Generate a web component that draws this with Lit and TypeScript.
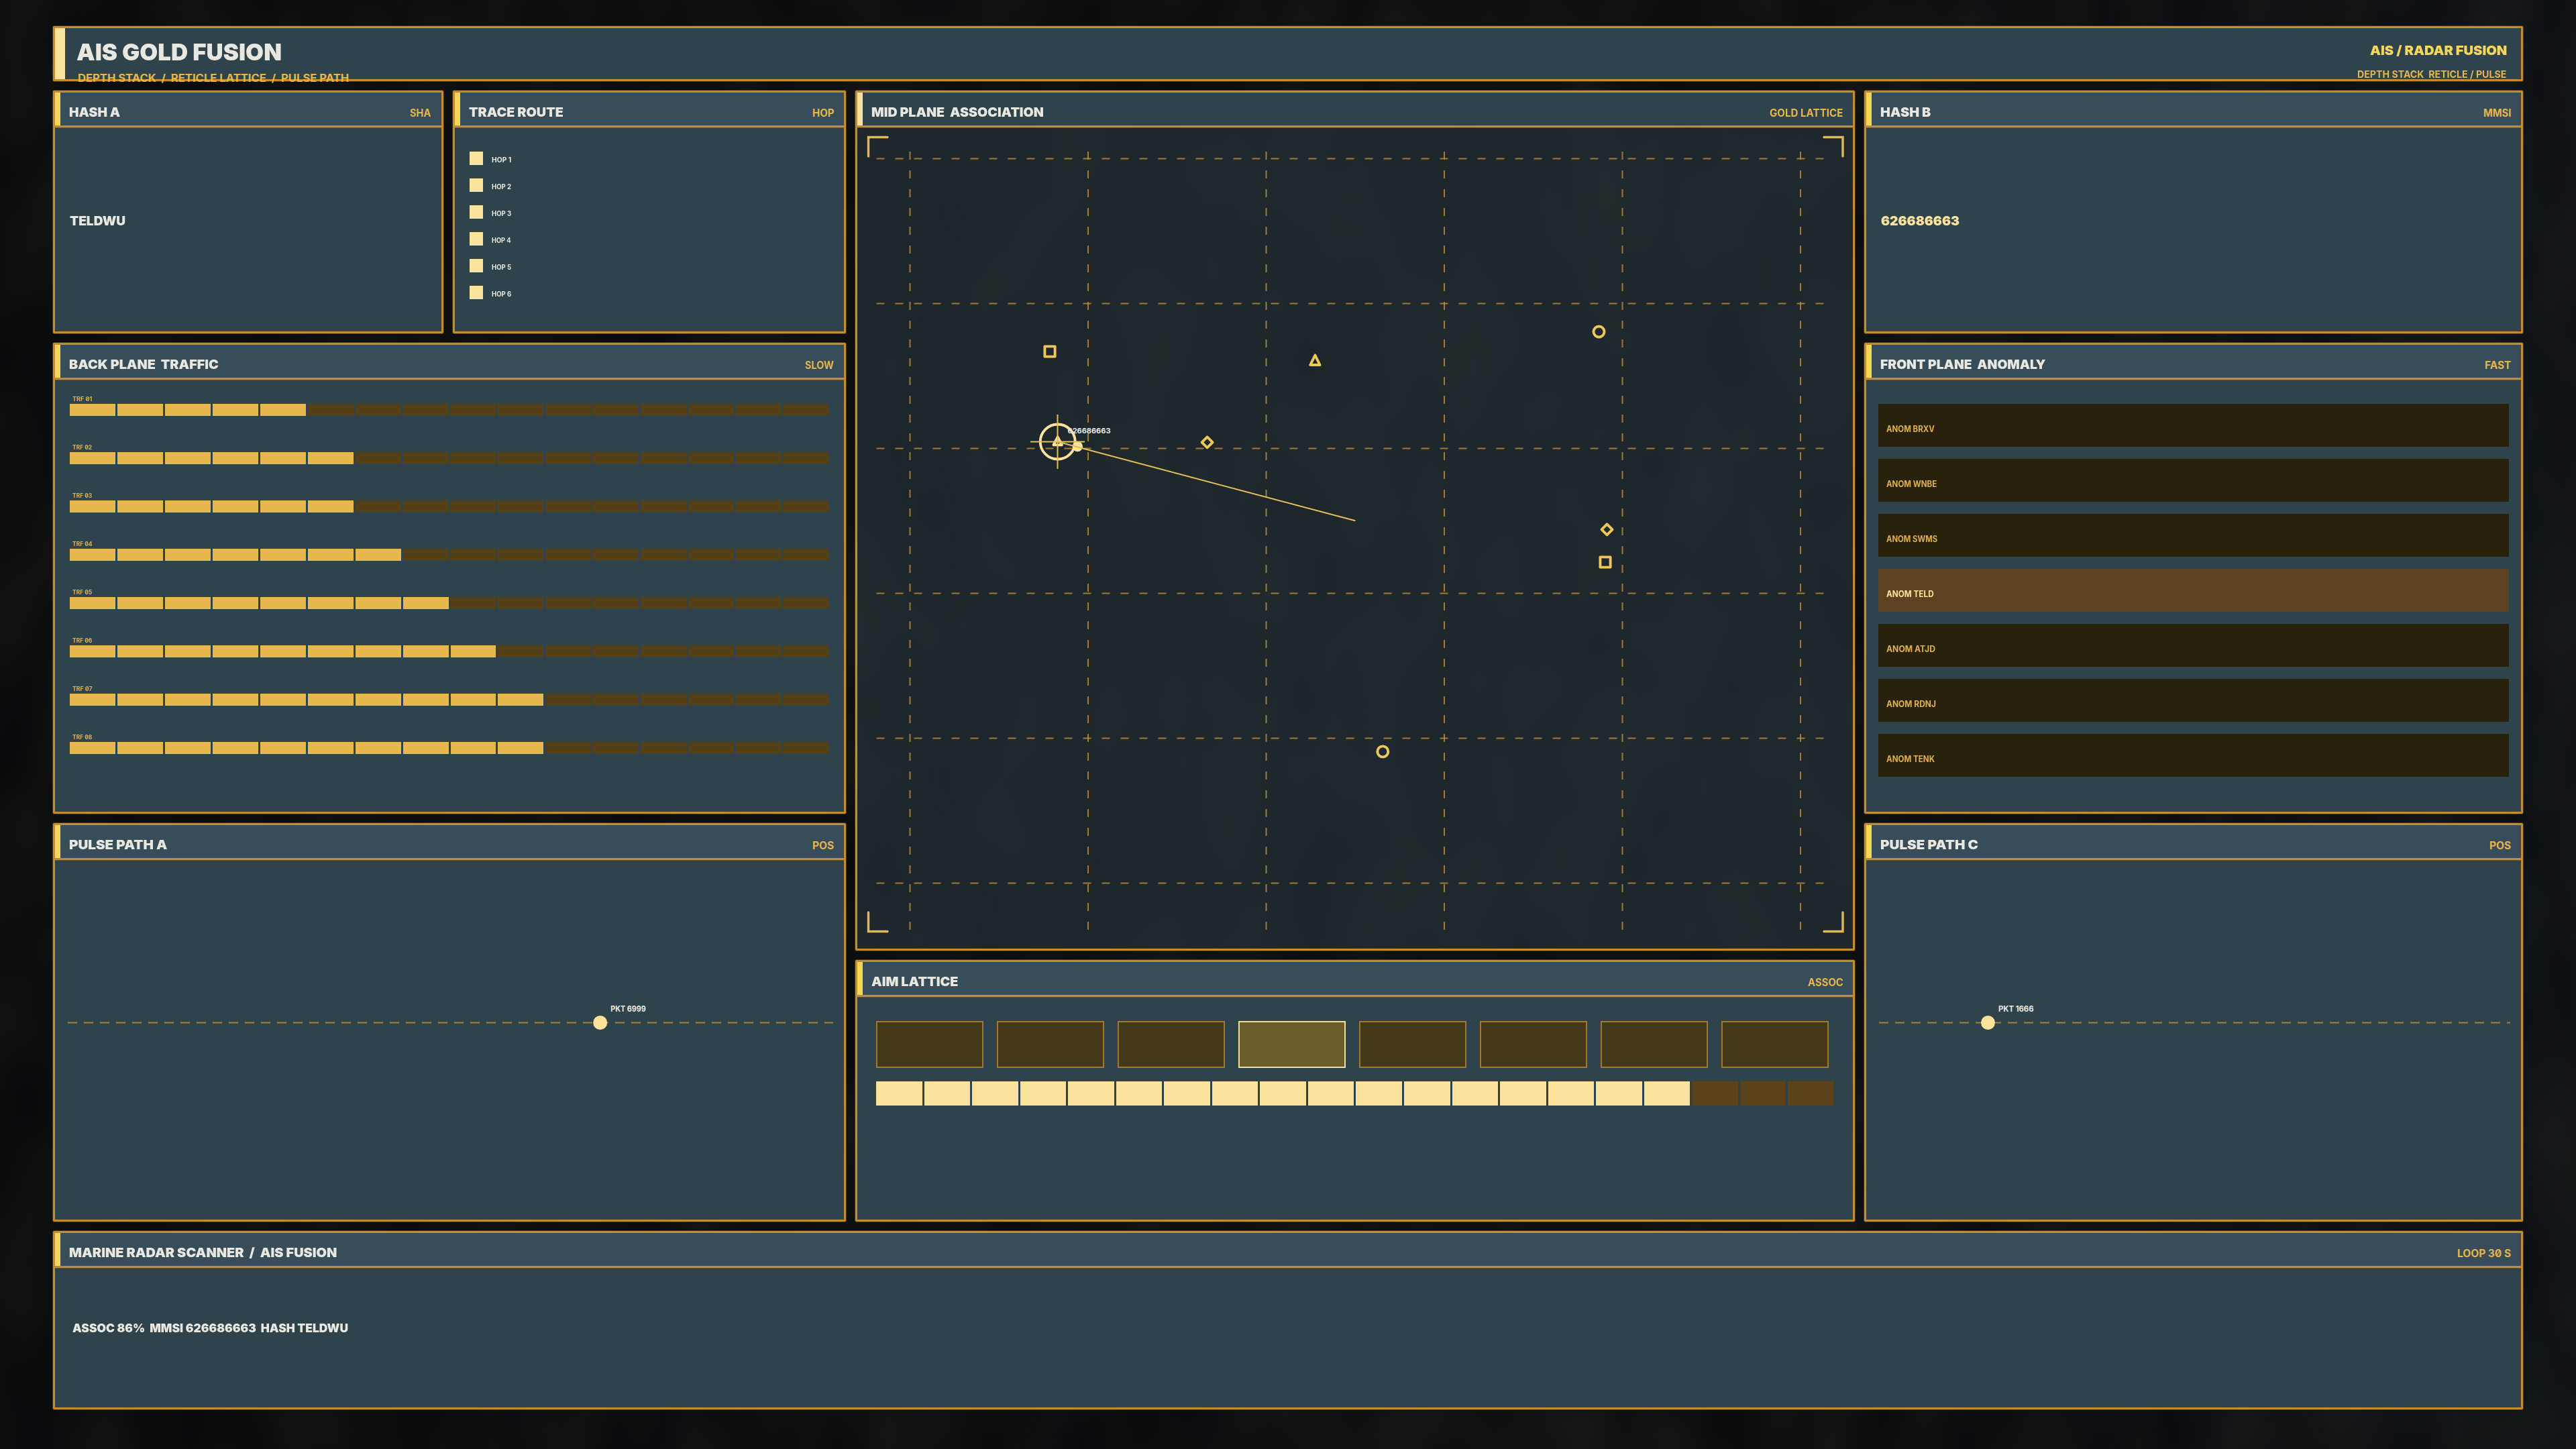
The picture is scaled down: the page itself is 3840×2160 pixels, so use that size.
import { LitElement, html, svg, css } from "lit";
import { customElement, property } from "lit/decorators.js";

const pen = document.createElement("canvas").getContext("2d")!;
const CAP_RATIO = 0.7273;

/** A line of capitals set to an exact cap height and ink width. */
@customElement("fit-text")
class FitText extends LitElement {
  @property() text = "";
  @property({ type: Number }) cap = 14;
  @property({ type: Number }) width = 100;
  @property({ type: Number }) weight = 900;

  static styles = css`
    :host {
      display: block;
      flex: none;
    }
    .line {
      display: inline-block;
      white-space: pre;
      transform-origin: 0 0;
      font-family: Inter, "Liberation Sans", sans-serif;
      font-feature-settings: "zero" 1;
      line-height: ${0.7273};
      vertical-align: top;
    }
  `;

  render() {
    const size = this.cap / CAP_RATIO;
    pen.font = `${this.weight} ${size}px Inter, "Liberation Sans", sans-serif`;
    const m = pen.measureText(this.text);
    const k = this.width / (m.actualBoundingBoxLeft + m.actualBoundingBoxRight);
    this.style.width = `${this.width}px`;
    this.style.height = `${this.cap}px`;
    return html`<span
      class="line"
      style="font-size:${size}px;font-weight:${this.weight};transform:matrix(${k},0,0,1,${m.actualBoundingBoxLeft * k},0)"
      >${this.text}</span
    >`;
  }
}

/** Framed panel with a title bar, an accent tab and a badge. */
@customElement("plane-panel")
class PlanePanel extends LitElement {
  @property() heading = "";
  @property({ type: Number }) headingWidth = 100;
  @property() badge = "";
  @property({ type: Number }) badgeWidth = 30;
  @property({ type: Boolean, reflect: true }) focal = false;

  static styles = css`
    :host {
      display: flex;
      flex-direction: column;
      box-sizing: border-box;
      border: 3px solid #c48c2f;
      border-radius: 2px;
      box-shadow: 0 0 0 1px rgba(196, 140, 47, 0.28);
      background: #2f434c;
      min-width: 0;
      min-height: 0;
    }
    :host([focal]) {
      background: rgba(48, 67, 76, 0.48);
    }
    .bar {
      display: flex;
      align-items: flex-end;
      height: 49px;
      flex: none;
      background: #374d59;
      border-bottom: 3px solid #c48c2f;
      box-shadow: 0 1px 0 rgba(196, 140, 47, 0.28);
    }
    :host([focal]) .bar {
      background: #2f434c;
    }
    .tab {
      width: 8px;
      align-self: stretch;
      background: #f6d55c;
      margin-right: 12.5px;
    }
    :host([focal]) .tab {
      background: #fbe39d;
    }
    .heading {
      color: #e9e8e0;
      margin-bottom: 13px;
    }
    .badge {
      color: #e6b64c;
      margin: 0 15px 13px auto;
    }
    .body {
      flex: 1;
      display: flex;
      flex-direction: column;
      min-height: 0;
    }
  `;

  render() {
    return html`
      <div class="bar">
        <div class="tab"></div>
        <fit-text class="heading" .text=${this.heading} .cap=${14} .width=${this.headingWidth}></fit-text>
        <fit-text class="badge" .text=${this.badge} .cap=${11.2} .width=${this.badgeWidth} .weight=${700}></fit-text>
      </div>
      <div class="body"><slot></slot></div>
    `;
  }
}

const TRAFFIC = [5, 6, 6, 7, 8, 9, 10, 10];
const ANOMALIES: [string, number][] = [
  ["BRXV", 72.3],
  ["WNBE", 74.6],
  ["SWMS", 76],
  ["TELD", 70.6],
  ["ATJD", 73],
  ["RDNJ", 73.6],
  ["TENK", 72],
];
const GRID_X = [1356.5, 1622, 1887.5, 2153, 2418.5, 2684];
const GRID_Y = [236.5, 452.5, 668.5, 884.5, 1100.5, 1316.5];
const range = (n: number) => Array.from({ length: n }, (_, i) => i);

@customElement("app-root")
class AppRoot extends LitElement {
  static styles = css`
    :host {
      display: block;
      position: relative;
      box-sizing: border-box;
      width: 3840px;
      height: 2160px;
      overflow: hidden;
      background: #0d1012;
      font-family: Inter, "Liberation Sans", sans-serif;
    }
    .haze {
      position: absolute;
      inset: 0;
      width: 100%;
      height: 100%;
    }
    .frame {
      position: relative;
      display: flex;
      flex-direction: column;
      gap: 14px;
      box-sizing: border-box;
      height: 100%;
      padding: 39px 79px 59px;
    }
    .masthead {
      display: flex;
      height: 82px;
      flex: none;
      box-sizing: border-box;
      border: 3px solid #c48c2f;
      border-radius: 2px;
      box-shadow: 0 0 0 1px rgba(196, 140, 47, 0.28);
      background: #2f434c;
    }
    .mast-tab {
      width: 14.5px;
      background: #fbe39d;
      margin-right: 17.7px;
    }
    .mast-left {
      flex: 1;
      padding-top: 23px;
    }
    .mast-title {
      color: #e9e8e0;
    }
    .mast-sub {
      color: #e6b64c;
      margin: 20.8px 0 0 2.7px;
    }
    .mast-right {
      display: flex;
      flex-direction: column;
      align-items: flex-end;
      padding: 26px 21.3px 0 0;
    }
    .mast-mode {
      color: #f6d55c;
    }
    .mast-note {
      color: #e6b64c;
      margin-top: 23.8px;
    }
    .planes {
      display: grid;
      grid-template-columns: 1182px 1490px 982px;
      gap: 14px;
      flex: 1;
      min-height: 0;
    }
    .left,
    .right {
      display: grid;
      grid-template-rows: 362px 702px 594px;
      gap: 14px;
    }
    .pair {
      display: grid;
      grid-template-columns: 582px 586px;
      gap: 14px;
    }
    .middle {
      display: grid;
      grid-template-rows: 1282px 390px;
      gap: 14px;
    }
    .footer {
      height: 266px;
      flex: none;
    }
    .hash {
      margin: 132px 0 0 22.4px;
      color: #e9e8e0;
    }
    .hash.hot {
      color: #fbe39d;
    }
    .hops {
      display: flex;
      flex-direction: column;
      gap: 20px;
      padding: 36px 0 0 22px;
    }
    .hop {
      display: flex;
      gap: 12.6px;
      height: 20px;
      color: #e9e8e0;
    }
    .hop-box {
      width: 20px;
      background: #fbe39d;
    }
    .hop-name {
      margin-top: 9px;
    }
    .traffic {
      padding: 25.7px 22px 0;
    }
    .lane {
      height: 72px;
      display: flex;
      flex-direction: column;
      gap: 4px;
      color: #e0b24d;
    }
    .lane-name {
      margin-left: 4.4px;
    }
    .segments {
      display: flex;
      gap: 3px;
      height: 18px;
    }
    .segment {
      flex: 1;
      background: #553f17;
    }
    .segment.on {
      background: #e7b84d;
    }
    .anomalies {
      display: flex;
      flex-direction: column;
      gap: 18px;
      padding: 36px 18px 0;
    }
    .anomaly {
      box-sizing: border-box;
      height: 64px;
      padding: 33px 0 0 12px;
      background: #28210b;
      color: #e0b04a;
    }
    .anomaly.active {
      background: #5c4220;
      color: #fbe39d;
    }
    .cells {
      display: flex;
      gap: 20px;
      padding: 36px 28px 0;
    }
    .cell {
      box-sizing: border-box;
      width: 160px;
      height: 70px;
      border: 2px solid #a57727;
      background: #43391a;
    }
    .cell.active {
      border-color: #f3dc96;
      background: #6b5e2a;
    }
    .strength {
      display: flex;
      gap: 3px;
      height: 36px;
      margin: 20px 28px 0;
    }
    .step {
      flex: 1;
      background: #5b421a;
    }
    .step.on {
      background: #fbe39d;
    }
    .plot {
      display: block;
      width: 100%;
      flex: 1;
      min-height: 0;
    }
    .rule {
      stroke: #c68f30;
      stroke-width: 2;
      opacity: 0.8;
    }
    .bracket {
      fill: none;
      stroke: #e7b84d;
      stroke-width: 3.4;
      stroke-linecap: round;
    }
    .mark {
      fill: none;
      stroke: #efc65a;
      stroke-width: 3.9;
      stroke-linejoin: round;
    }
    .cream {
      stroke: #fbe39d;
    }
    .fill {
      fill: #fbe39d;
    }
    .hair {
      stroke: #e3c05c;
      stroke-width: 2;
    }
    .tag {
      fill: #eceae3;
      font-weight: 700;
    }
    .status {
      margin: 84px 0 0 26px;
      color: #e9e8e0;
    }
  `;

  private haze() {
    return html`<svg class="haze" viewBox="0 0 3840 2160" preserveAspectRatio="none">
      <defs>
        <filter id="murk" x="0" y="0" width="100%" height="100%" color-interpolation-filters="sRGB">
          <feTurbulence type="fractalNoise" baseFrequency="0.009 0.005" numOctaves="2" seed="11"></feTurbulence>
          <feColorMatrix
            values="0.07 0 0 0 0.022  0.07 0 0 0 0.028  0.05 0.02 0 0 0.031  0 0 0 0 1"
          ></feColorMatrix>
        </filter>
        <linearGradient id="shore" x1="0" x2="1" y1="0" y2="0">
          <stop offset="0" stop-color="#000" stop-opacity="0.14"></stop>
          <stop offset="0.6" stop-color="#000" stop-opacity="0"></stop>
          <stop offset="1" stop-color="#1c2836" stop-opacity="0.14"></stop>
        </linearGradient>
      </defs>
      <rect width="3840" height="2160" filter="url(#murk)"></rect>
      <rect width="3840" height="2160" fill="url(#shore)"></rect>
    </svg>`;
  }

  private diamond(x: number, y: number) {
    return svg`<path class="mark" d="M${x} ${y - 8}l8 8l-8 8l-8 -8z"></path>`;
  }

  private square(x: number, y: number) {
    return svg`<rect class="mark" x=${x - 7.6} y=${y - 7.6} width="15.2" height="15.2"></rect>`;
  }

  private scope() {
    return html`<svg class="plot" viewBox="1278 190 1484 1224">
      ${GRID_X.map((x) => svg`<line class="rule" x1=${x} x2=${x} y1="226" y2="1388" stroke-dasharray="12 16"></line>`)}
      ${GRID_Y.map((y) => svg`<line class="rule" x1="1306.5" x2="2720" y1=${y} y2=${y} stroke-dasharray="12 16"></line>`)}
      <path class="bracket" d="M1323 204.5H1294.5V233"></path>
      <path class="bracket" d="M2719 204.5H2747V233"></path>
      <path class="bracket" d="M1323 1388.5H1294.5V1360"></path>
      <path class="bracket" d="M2719 1388.5H2747V1360"></path>
      ${this.square(1565, 524)} ${this.square(2393, 838)}
      ${this.diamond(1799.6, 659.3)} ${this.diamond(2395.5, 789.3)}
      <circle class="mark" cx="2383.5" cy="494.5" r="8"></circle>
      <circle class="mark" cx="2061.3" cy="1120.4" r="8"></circle>
      <path class="mark" d="M1960.4 529.6l7.2 14.4h-14.4z"></path>
      <path class="mark cream" d="M1576.7 651.4l6.2 11.8h-12.4z"></path>
      <circle class="mark cream" cx="1576.7" cy="658.5" r="26"></circle>
      <circle class="fill" cx="1606.3" cy="665.5" r="7.7"></circle>
      <path class="hair" d="M1536 658.5H1617M1576.5 618V699"></path>
      <line class="hair" x1="1576.7" y1="658.5" x2="2020.4" y2="776.3"></line>
      <text class="tag" x="1591.5" y="646" font-size="10.8" textLength="64" lengthAdjust="spacingAndGlyphs">626686663</text>
    </svg>`;
  }

  private pulse(left: number, right: number, x: number, label: string) {
    return html`<svg class="plot" viewBox="${left} 1282 ${right - left} 536">
      <line class="rule" x1=${left + 19} x2=${right - 16} y1="1524.5" y2="1524.5" stroke-dasharray="14 10"></line>
      <circle class="fill" cx=${x} cy="1524.5" r="10.5"></circle>
      <text class="tag" x=${x + 15.5} y="1508" font-size="11.5" textLength="52.5" lengthAdjust="spacingAndGlyphs">${label}</text>
    </svg>`;
  }

  private segments(count: number, on: number, row: string, item: string) {
    return html`<div class=${row}>${range(count).map((i) => html`<div class="${item} ${i < on ? "on" : ""}"></div>`)}</div>`;
  }

  render() {
    return html`
      ${this.haze()}
      <div class="frame">
        <header class="masthead">
          <div class="mast-tab"></div>
          <div class="mast-left">
            <fit-text class="mast-title" .text=${"AIS GOLD FUSION"} .cap=${25} .width=${304.5}></fit-text>
            <fit-text
              class="mast-sub"
              .text=${"DEPTH STACK  /  RETICLE LATTICE  /  PULSE PATH"}
              .cap=${11.3}
              .width=${402.5}
              .weight=${700}
            ></fit-text>
          </div>
          <div class="mast-right">
            <fit-text class="mast-mode" .text=${"AIS / RADAR FUSION"} .cap=${14} .width=${203.5}></fit-text>
            <fit-text
              class="mast-note"
              .text=${"DEPTH STACK  RETICLE / PULSE"}
              .cap=${10.6}
              .width=${222.5}
              .weight=${700}
            ></fit-text>
          </div>
        </header>

        <main class="planes">
          <section class="left">
            <div class="pair">
              <plane-panel heading="HASH A" .headingWidth=${76} badge="SHA" .badgeWidth=${32}>
                <fit-text class="hash" .text=${"TELDWU"} .cap=${14} .width=${82.3}></fit-text>
              </plane-panel>
              <plane-panel heading="TRACE ROUTE" .headingWidth=${140} badge="HOP" .badgeWidth=${31.5}>
                <div class="hops">
                  ${range(6).map(
                    (i) => html`<div class="hop">
                      <div class="hop-box"></div>
                      <fit-text class="hop-name" .text=${`HOP ${i + 1}`} .cap=${7.1} .width=${29} .weight=${700}></fit-text>
                    </div>`
                  )}
                </div>
              </plane-panel>
            </div>
            <plane-panel heading="BACK PLANE  TRAFFIC" .headingWidth=${222.5} badge="SLOW" .badgeWidth=${43}>
              <div class="traffic">
                ${TRAFFIC.map(
                  (on, i) => html`<div class="lane">
                    <fit-text class="lane-name" .text=${`TRF 0${i + 1}`} .cap=${6.4} .width=${29.6} .weight=${700}></fit-text>
                    ${this.segments(16, on, "segments", "segment")}
                  </div>`
                )}
              </div>
            </plane-panel>
            <plane-panel heading="PULSE PATH A" .headingWidth=${146} badge="POS" .badgeWidth=${31}>
              ${this.pulse(82, 1258, 894.7, "PKT 6999")}
            </plane-panel>
          </section>

          <section class="middle">
            <plane-panel focal heading="MID PLANE  ASSOCIATION" .headingWidth=${256} badge="GOLD LATTICE" .badgeWidth=${109}>
              ${this.scope()}
            </plane-panel>
            <plane-panel heading="AIM LATTICE" .headingWidth=${128.5} badge="ASSOC" .badgeWidth=${52.5}>
              <div class="cells">${range(8).map((i) => html`<div class="cell ${i === 3 ? "active" : ""}"></div>`)}</div>
              ${this.segments(20, 17, "strength", "step")}
            </plane-panel>
          </section>

          <section class="right">
            <plane-panel heading="HASH B" .headingWidth=${75.5} badge="MMSI" .badgeWidth=${40}>
              <fit-text class="hash hot" .text=${"626686663"} .cap=${14} .width=${117}></fit-text>
            </plane-panel>
            <plane-panel heading="FRONT PLANE  ANOMALY" .headingWidth=${246.5} badge="FAST" .badgeWidth=${38}>
              <div class="anomalies">
                ${ANOMALIES.map(
                  ([name, w], i) => html`<div class="anomaly ${i === 3 ? "active" : ""}">
                    <fit-text .text=${`ANOM ${name}`} .cap=${9.1} .width=${w} .weight=${700}></fit-text>
                  </div>`
                )}
              </div>
            </plane-panel>
            <plane-panel heading="PULSE PATH C" .headingWidth=${145.5} badge="POS" .badgeWidth=${31}>
              ${this.pulse(2782, 3758, 2963.5, "PKT 1666")}
            </plane-panel>
          </section>
        </main>

        <plane-panel
          class="footer"
          heading="MARINE RADAR SCANNER  /  AIS FUSION"
          .headingWidth=${398.5}
          badge="LOOP 30 S"
          .badgeWidth=${79}
        >
          <fit-text
            class="status"
            .text=${"ASSOC 86%  MMSI 626686663  HASH TELDWU"}
            .cap=${12.6}
            .width=${410.5}
          ></fit-text>
        </plane-panel>
      </div>
    `;
  }
}
